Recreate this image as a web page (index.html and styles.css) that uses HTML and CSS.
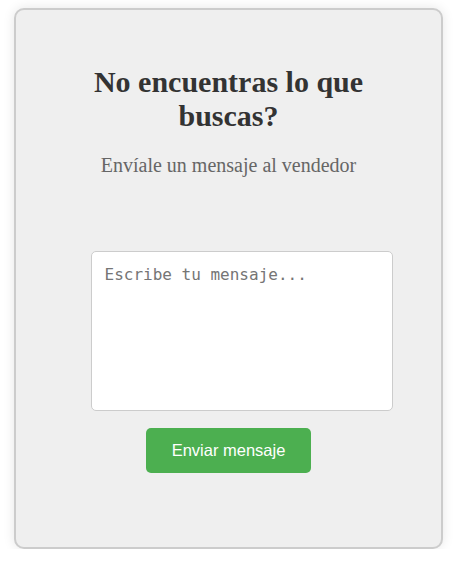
FILE: index.html
```html
<!DOCTYPE html>
<html lang="es">
<head>
<meta charset="utf-8">
<title>Contacto</title>
<link rel="stylesheet" href="styles.css">
</head>
<body>
<div class="card">
  <h2 class="title">No encuentras lo que buscas?</h2>
  <p class="subtitle">Envíale un mensaje al vendedor</p>
  <form class="form">
    <textarea class="message" placeholder="Escribe tu mensaje..."></textarea>
    <button type="button" class="send">Enviar mensaje</button>
  </form>
</div>
</body>
</html>
```
FILE: styles.css
```css
html, body {
  margin: 0;
  padding: 0;
  background: #ffffff;
}
body {
  padding: 8px 0 0 14px;
}
.card {
  box-sizing: border-box;
  width: 429px;
  height: 541px;
  background: #efefef;
  border: 2px solid #cccccc;
  border-radius: 10px;
  box-shadow: 0 0 12px rgba(0, 0, 0, 0.1);
  display: flex;
  flex-direction: column;
  align-items: center;
  padding: 55px 20px 0;
  font-family: "Liberation Serif", "Times New Roman", serif;
}
.title {
  margin: 0;
  width: 300px;
  text-align: center;
  font-size: 30px;
  line-height: 34px;
  font-weight: bold;
  color: #333333;
}
.subtitle {
  margin: 20px 0 0;
  font-size: 20px;
  line-height: 24px;
  color: #666666;
}
.form {
  margin-top: 74px;
  display: flex;
  flex-direction: column;
  align-items: center;
  gap: 17px;
}
.message {
  box-sizing: border-box;
  width: 302px;
  height: 160px;
  margin-left: 26px;
  padding: 13px 13px;
  border: 1px solid #cccccc;
  border-radius: 5px;
  background: #ffffff;
  font-family: "DejaVu Sans Mono", monospace;
  font-size: 16px;
  resize: none;
  outline: none;
}
.message::placeholder {
  color: #757575;
}
.send {
  width: 165px;
  height: 45px;
  border: none;
  border-radius: 5px;
  background: #4caf50;
  color: #ffffff;
  font-family: "Liberation Sans", Arial, sans-serif;
  font-size: 16.5px;
  cursor: pointer;
}
```
